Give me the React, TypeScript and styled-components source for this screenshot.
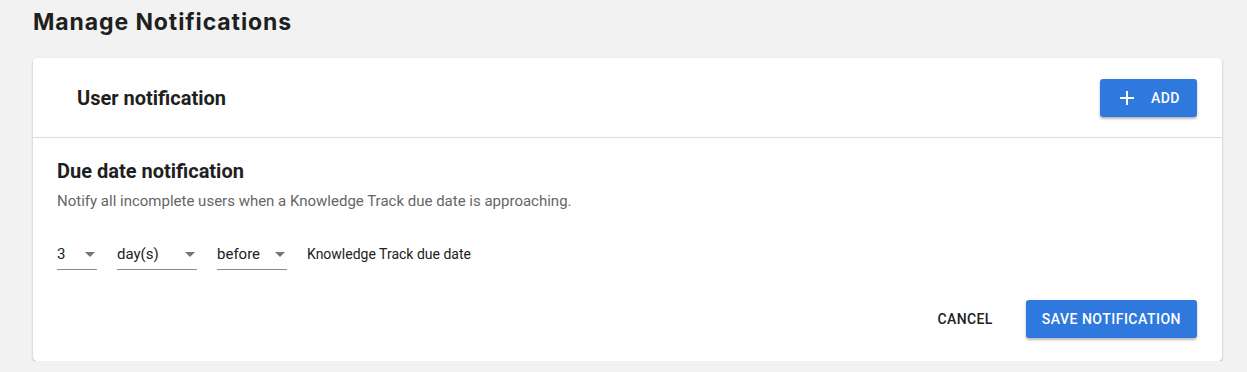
import React from 'react';
import styled, { createGlobalStyle } from 'styled-components';

const GlobalStyle = createGlobalStyle`
  html, body {
    margin: 0;
    padding: 0;
    background: #f2f2f2;
    font-family: Roboto, "Liberation Sans", sans-serif;
    color: #212121;
  }
  * { box-sizing: border-box; }
`;

const Page = styled.div`
  padding: 8px 25px 0 33px;
`;

const PageTitle = styled.h1`
  margin: 0 0 22px;
  font-family: Inter, "Noto Sans", sans-serif;
  font-size: 23px;
  line-height: 28px;
  font-weight: 700;
  letter-spacing: 0.9px;
  color: #1f1f1f;
`;

const Card = styled.section`
  background: #fff;
  border-radius: 4px;
  box-shadow: 0 1px 3px rgba(0, 0, 0, 0.2), 0 1px 1px rgba(0, 0, 0, 0.14);
  width: 1189px;
`;

const CardHeader = styled.header`
  display: flex;
  align-items: center;
  justify-content: space-between;
  height: 80px;
  padding: 0 25px 0 44px;
  border-bottom: 1px solid #dcdcdc;
`;

const HeaderTitle = styled.h2`
  margin: 0;
  font-size: 20px;
  font-weight: 700;
  color: #1f1f1f;
`;

const PrimaryButton = styled.button<{ $pad?: string }>`
  display: inline-flex;
  align-items: center;
  gap: 16px;
  height: 38px;
  padding: ${(p) => p.$pad || '0 16px'};
  border: none;
  border-radius: 3px;
  background: #2f78de;
  color: #fff;
  font-family: Roboto, "Liberation Sans", sans-serif;
  font-size: 14px;
  font-weight: 500;
  letter-spacing: 0.5px;
  text-transform: uppercase;
  box-shadow: 0 2px 2px rgba(0, 0, 0, 0.2), 0 1px 4px rgba(0, 0, 0, 0.12);
  cursor: pointer;
`;

const TextButton = styled.button`
  height: 38px;
  padding: 0 8px;
  border: none;
  background: transparent;
  color: #212121;
  font-family: Roboto, "Liberation Sans", sans-serif;
  font-size: 14px;
  font-weight: 500;
  letter-spacing: 0.4px;
  cursor: pointer;
`;

const CardBody = styled.div`
  padding: 21px 25px 23px 24px;
`;

const SectionTitle = styled.h3`
  margin: 0;
  font-size: 20px;
  line-height: 24px;
  font-weight: 700;
  color: #1f1f1f;
`;

const Description = styled.p`
  margin: 9px 0 0;
  font-size: 15px;
  line-height: 18px;
  color: #666;
`;

const SelectRow = styled.div`
  display: flex;
  align-items: center;
  gap: 20px;
  margin-top: 30px;
`;

const SelectBox = styled.div<{ $width: number }>`
  display: flex;
  align-items: center;
  justify-content: space-between;
  width: ${(p) => p.$width}px;
  height: 30px;
  padding-bottom: 1px;
  border-bottom: 1px solid #8a8a8a;
  font-size: 15px;
  color: #212121;
`;

const Caret = styled.span`
  width: 0;
  height: 0;
  margin-right: 2px;
  border-left: 5px solid transparent;
  border-right: 5px solid transparent;
  border-top: 5px solid #757575;
`;

const SuffixText = styled.span`
  font-size: 14px;
  color: #212121;
  padding-bottom: 2px;
`;

const Actions = styled.div`
  display: flex;
  justify-content: flex-end;
  align-items: center;
  gap: 25px;
  margin-top: 30px;
`;

const PlusIcon = () => (
  <svg width="16" height="16" viewBox="0 0 16 16" aria-hidden="true">
    <path d="M8 1v14M1 8h14" stroke="#fff" strokeWidth="2" fill="none" />
  </svg>
);

const Select = ({ value, width }: { value: string; width: number }) => (
  <SelectBox $width={width}>
    <span>{value}</span>
    <Caret />
  </SelectBox>
);

const App = () => {
  return (
    <>
      <GlobalStyle />
      <Page>
        <PageTitle>Manage Notifications</PageTitle>
        <Card>
          <CardHeader>
            <HeaderTitle>User notification</HeaderTitle>
            <PrimaryButton $pad="0 17px 0 19px">
              <PlusIcon />
              Add
            </PrimaryButton>
          </CardHeader>
          <CardBody>
            <SectionTitle>Due date notification</SectionTitle>
            <Description>
              Notify all incomplete users when a Knowledge Track due date is approaching.
            </Description>
            <SelectRow>
              <Select value="3" width={40} />
              <Select value="day(s)" width={80} />
              <Select value="before" width={70} />
              <SuffixText>Knowledge Track due date</SuffixText>
            </SelectRow>
            <Actions>
              <TextButton>CANCEL</TextButton>
              <PrimaryButton>Save Notification</PrimaryButton>
            </Actions>
          </CardBody>
        </Card>
      </Page>
    </>
  );
};

export default App;
